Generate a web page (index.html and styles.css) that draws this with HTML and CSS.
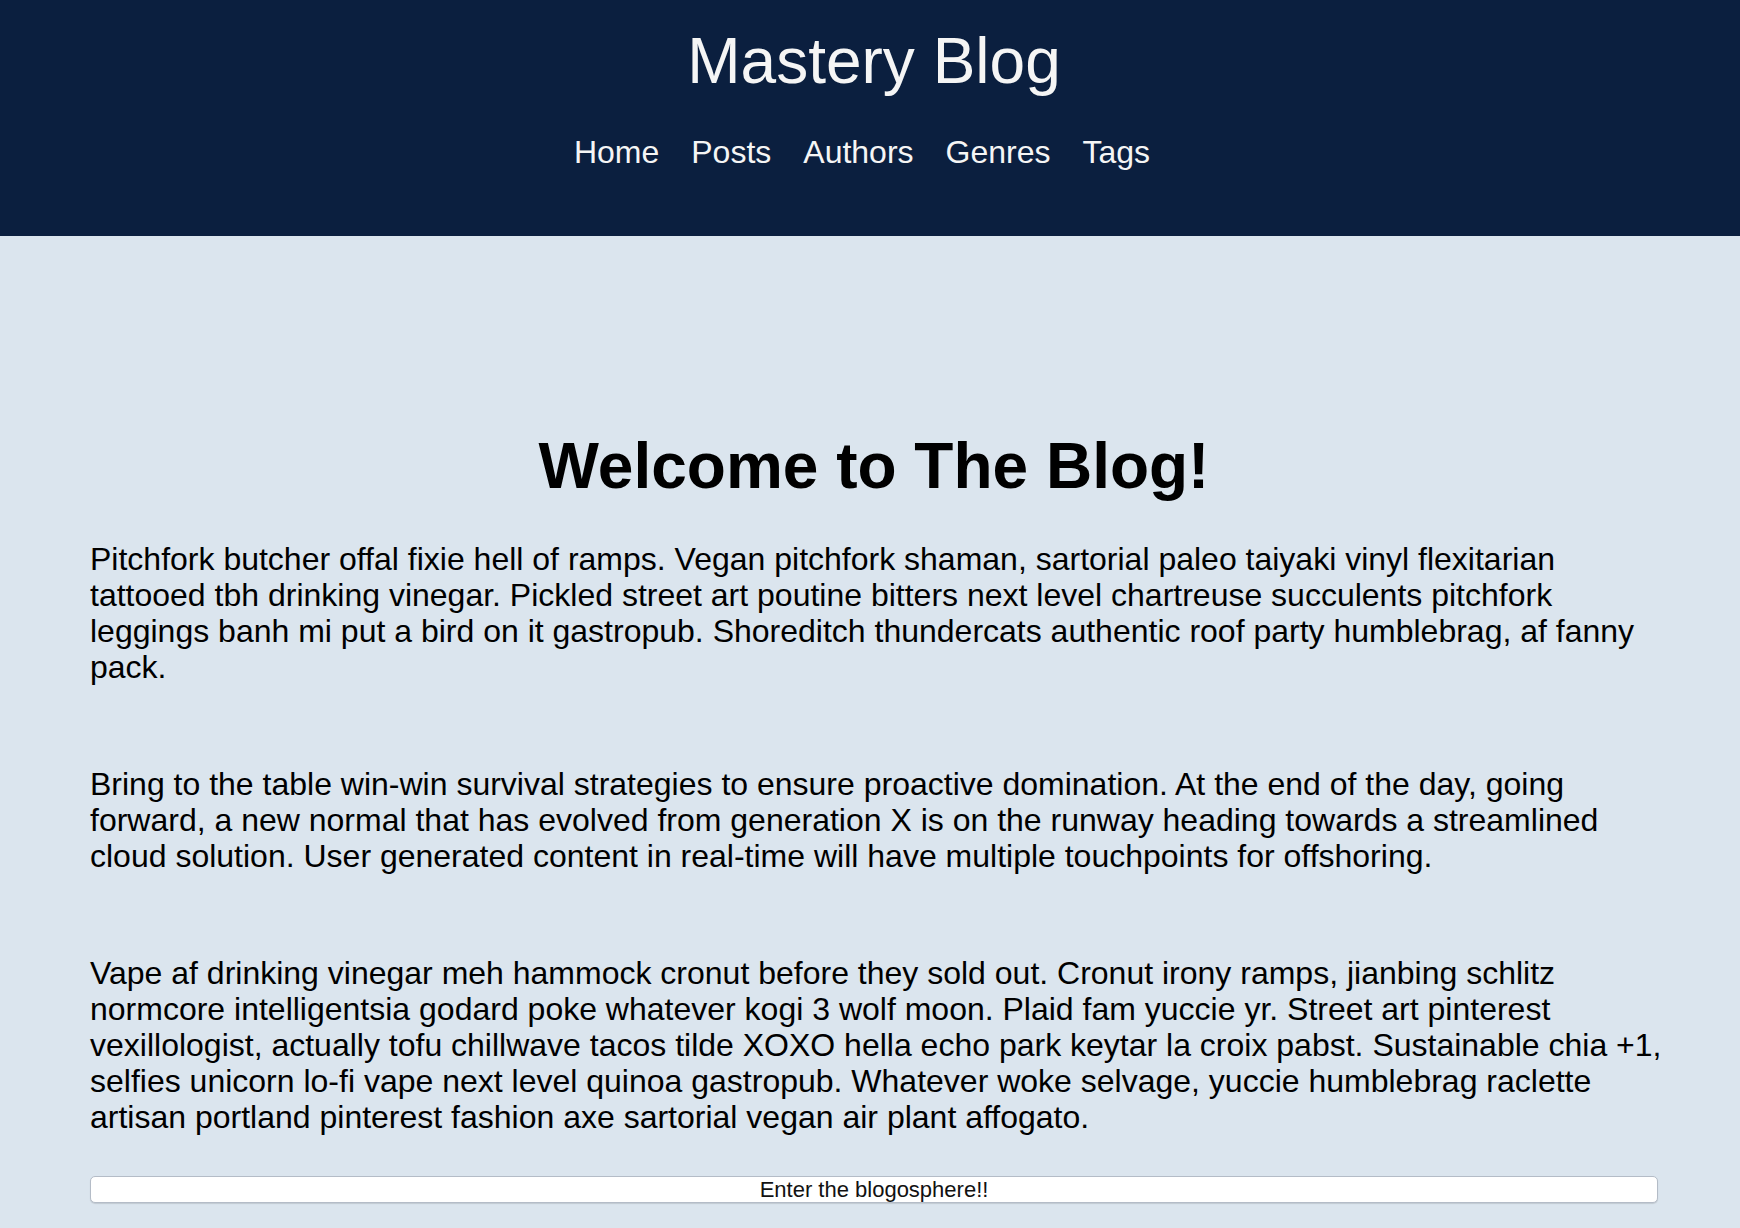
FILE: index.html
```html
<!DOCTYPE html>
<html lang="en">
<head>
<meta charset="utf-8">
<title>Mastery Blog</title>
<link rel="stylesheet" href="styles.css">
</head>
<body>
<header class="site-header">
  <h1 class="site-title">Mastery Blog</h1>
  <nav class="site-nav">
    <a href="#">Home</a>
    <a href="#">Posts</a>
    <a href="#">Authors</a>
    <a href="#">Genres</a>
    <a href="#">Tags</a>
  </nav>
</header>
<main class="content">
  <h2 class="welcome">Welcome to The Blog!</h2>
  <p class="intro">Pitchfork butcher offal fixie hell of ramps. Vegan pitchfork shaman, sartorial paleo taiyaki vinyl flexitarian tattooed tbh drinking vinegar. Pickled street art poutine bitters next level chartreuse succulents pitchfork leggings banh mi put a bird on it gastropub. Shoreditch thundercats authentic roof party humblebrag, af fanny pack.</p>
  <p class="intro">Bring to the table win-win survival strategies to ensure proactive domination. At the end of the day, going forward, a new normal that has evolved from generation X is on the runway heading towards a streamlined cloud solution. User generated content in real-time will have multiple touchpoints for offshoring.</p>
  <p class="intro">Vape af drinking vinegar meh hammock cronut before they sold out. Cronut irony ramps, jianbing schlitz normcore intelligentsia godard poke whatever kogi 3 wolf moon. Plaid fam yuccie yr. Street art pinterest vexillologist, actually tofu chillwave tacos tilde XOXO hella echo park keytar la croix pabst. Sustainable chia +1, selfies unicorn lo-fi vape next level quinoa gastropub. Whatever woke selvage, yuccie humblebrag raclette artisan portland pinterest fashion axe sartorial vegan air plant affogato.</p>
  <button class="enter-btn" type="button">Enter the blogosphere!!</button>
</main>
</body>
</html>
```

FILE: styles.css
```css
html, body {
  margin: 0;
  padding: 0;
}

body {
  background: #dbe5ee;
  font-family: "Liberation Sans", Arial, Helvetica, sans-serif;
  color: #000;
}

.site-header {
  background: #0b1f3f;
  color: #f5f5f5;
  padding: 24px 0 65px 8px;
  display: flex;
  flex-direction: column;
  align-items: center;
}

.site-title {
  margin: 0 0 36px;
  font-size: 64px;
  line-height: 74px;
  font-weight: normal;
}

.site-nav {
  display: flex;
  gap: 32px;
  padding-right: 24px;
  font-size: 32px;
  line-height: 37px;
}

.site-nav a {
  color: #f5f5f5;
  text-decoration: none;
}

.content {
  padding: 193px 82px 26px 90px;
  display: flex;
  flex-direction: column;
}

.welcome {
  margin: 0 0 38px;
  text-align: center;
  font-size: 64px;
  line-height: 74px;
  font-weight: bold;
}

.intro {
  margin: 0 -10px 81px 0;
  font-size: 32px;
  line-height: 36px;
}

.intro:last-of-type {
  margin-bottom: 41px;
}

.enter-btn {
  display: block;
  width: 100%;
  margin: 0;
  padding: 0;
  height: 27px;
  background: #fff;
  border: 1px solid #b4bcc7;
  border-radius: 5px;
  box-shadow: 0 1px 1px rgba(0, 0, 0, 0.12);
  font-family: "Liberation Sans", Arial, Helvetica, sans-serif;
  font-size: 22px;
  line-height: 25px;
  color: #111;
}
```
